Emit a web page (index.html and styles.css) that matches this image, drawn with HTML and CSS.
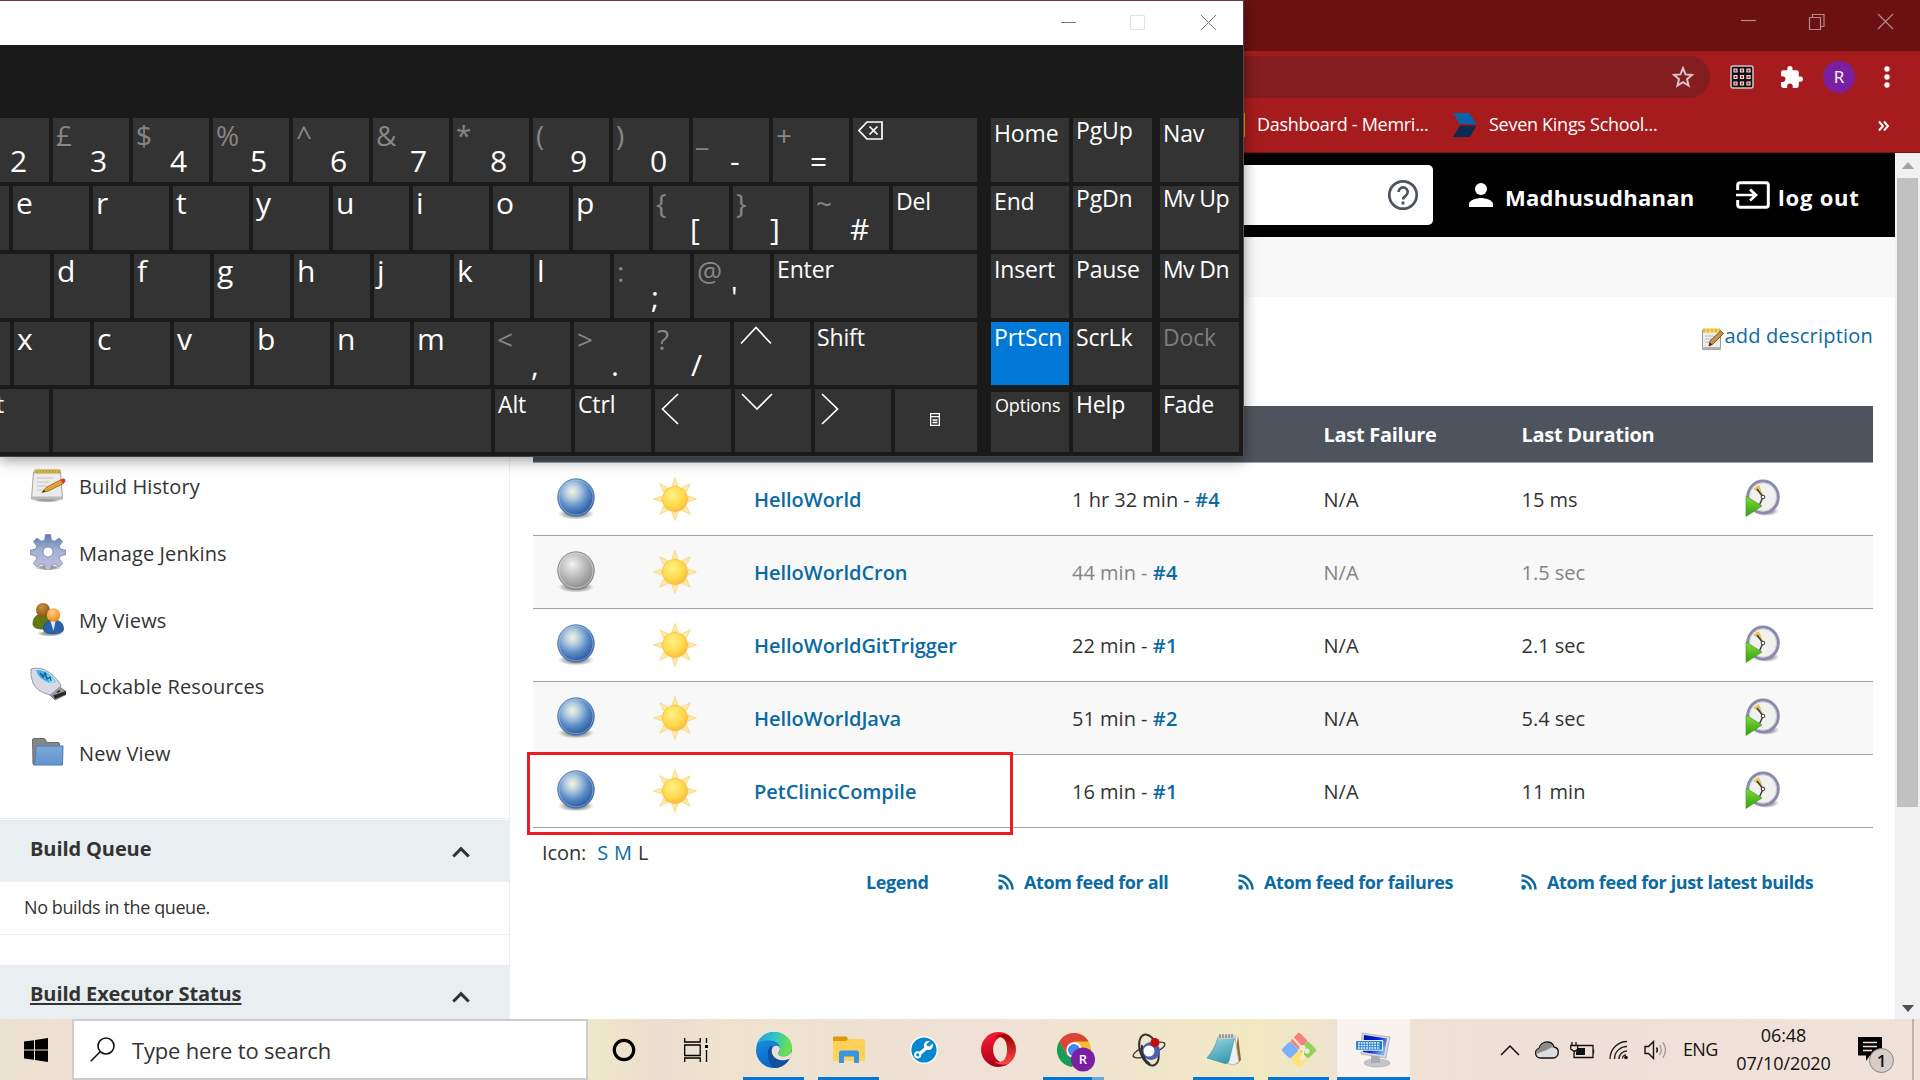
FILE: index.html
```html
<!DOCTYPE html>
<html lang="en">
<head>
<meta charset="utf-8">
<title>Dashboard [Jenkins]</title>
<link rel="stylesheet" href="styles.css">
</head>
<body>
<svg class="defs" aria-hidden="true">
  <defs>
    <radialGradient id="gBlue" cx=".4" cy=".34" r=".66"><stop offset="0" stop-color="#f4f6dc"/><stop offset=".3" stop-color="#b3cbe0"/><stop offset=".62" stop-color="#5f8fc8"/><stop offset="1" stop-color="#28589c"/></radialGradient>
    <radialGradient id="gGrey" cx=".4" cy=".34" r=".66"><stop offset="0" stop-color="#f2f2f2"/><stop offset=".5" stop-color="#bdbdbd"/><stop offset="1" stop-color="#8c8c8c"/></radialGradient>
    <radialGradient id="gShade"><stop offset=".5" stop-color="#000" stop-opacity=".38"/><stop offset="1" stop-color="#000" stop-opacity="0"/></radialGradient>
    <radialGradient id="gSun" cx=".4" cy=".35" r=".7"><stop offset="0" stop-color="#fff08a"/><stop offset=".6" stop-color="#ffdb4a"/><stop offset="1" stop-color="#fbb640"/></radialGradient>
    <linearGradient id="gEdge" x1="0" y1="0" x2="1" y2=".3"><stop offset="0" stop-color="#1b9de0"/><stop offset=".5" stop-color="#2fc3c8"/><stop offset="1" stop-color="#6be04c"/></linearGradient>
    <linearGradient id="gEdge2" x1="0" y1="0" x2=".3" y2="1"><stop offset="0" stop-color="#1c94e0"/><stop offset="1" stop-color="#0a68c8"/></linearGradient>
    <linearGradient id="gOpera" x1="0" y1="0" x2=".3" y2="1"><stop offset="0" stop-color="#ff2038"/><stop offset="1" stop-color="#a8001c"/></linearGradient>
    <linearGradient id="gOpera2" x1="0" y1="0" x2="0" y2="1"><stop offset="0" stop-color="#9c0000"/><stop offset="1" stop-color="#ff4b4b"/></linearGradient>
    <linearGradient id="gPad" x1="0" y1="0" x2=".4" y2="1"><stop offset="0" stop-color="#9fdbe4"/><stop offset="1" stop-color="#3d9db0"/></linearGradient>
    <linearGradient id="gScreen" x1="0" y1="0" x2="1" y2=".6"><stop offset="0" stop-color="#0710a0"/><stop offset=".55" stop-color="#0a1fd0"/><stop offset="1" stop-color="#7fb4ff"/></linearGradient>
    <linearGradient id="gGear" x1="0" y1="0" x2="0" y2="1"><stop offset="0" stop-color="#5b7bab"/><stop offset=".45" stop-color="#a3b0d3"/><stop offset="1" stop-color="#c3bfe2"/></linearGradient>
    <linearGradient id="gFolder" x1="0" y1="0" x2="0" y2="1"><stop offset="0" stop-color="#7ea7d8"/><stop offset="1" stop-color="#6394cd"/></linearGradient>
    <linearGradient id="gPlay" x1="0" y1="0" x2="0" y2="1"><stop offset="0" stop-color="#82dc3a"/><stop offset="1" stop-color="#2fa20c"/></linearGradient>
    <radialGradient id="gBrown" cx=".4" cy=".3" r=".7"><stop offset="0" stop-color="#c99045"/><stop offset="1" stop-color="#8a5310"/></radialGradient>
    <radialGradient id="gOrange" cx=".4" cy=".3" r=".7"><stop offset="0" stop-color="#ffd08a"/><stop offset="1" stop-color="#f08c14"/></radialGradient>
  </defs>
  <symbol id="ball-blue" viewBox="0 0 38 42">
    <ellipse cx="19" cy="36" rx="18" ry="5.5" fill="url(#gShade)"/>
    <ellipse cx="19" cy="19.5" rx="18.3" ry="18.7" fill="url(#gBlue)" stroke="#4472ad" stroke-width=".8"/>
    <ellipse cx="19" cy="19.5" rx="17" ry="17.4" fill="none" stroke="#a9c2e2" stroke-width="1" opacity=".65"/>
  </symbol>
  <symbol id="ball-grey" viewBox="0 0 38 42">
    <ellipse cx="19" cy="36" rx="18" ry="5.5" fill="url(#gShade)"/>
    <ellipse cx="19" cy="19.5" rx="18.3" ry="18.7" fill="url(#gGrey)" stroke="#7d7d7d" stroke-width=".8"/>
    <ellipse cx="19" cy="19.5" rx="17" ry="17.4" fill="none" stroke="#d6d6d6" stroke-width="1" opacity=".8"/>
  </symbol>
  <symbol id="sun" viewBox="-22 -22 44 44">
    <g fill="#ffe9a6" stroke="#f8d27d" stroke-width=".7">
      <path id="ray" d="M-3-13L0-21.5L3-13z"/>
      <use href="#ray" transform="rotate(45)"/><use href="#ray" transform="rotate(90)"/><use href="#ray" transform="rotate(135)"/><use href="#ray" transform="rotate(180)"/><use href="#ray" transform="rotate(225)"/><use href="#ray" transform="rotate(270)"/><use href="#ray" transform="rotate(315)"/>
    </g>
    <circle r="12.6" fill="url(#gSun)" stroke="#f7c04a" stroke-width=".9"/>
  </symbol>
  <symbol id="clock" viewBox="0 0 36 38">
    <ellipse cx="21" cy="32" rx="13" ry="5" fill="url(#gShade)"/>
    <ellipse cx="18" cy="18" rx="15.3" ry="16" fill="#f1f1f0" stroke="#8b89ae" stroke-width="3"/>
    <ellipse cx="18" cy="18" rx="13.6" ry="14.2" fill="none" stroke="#c5c5c5" stroke-width=".8"/>
    <path d="M8 10L14 6l4 10z" fill="#e6c25c"/>
    <path d="M12 10l6 8M18 18l-4 9" stroke="#3c3c3c" stroke-width="1.5" fill="none"/>
    <circle cx="18" cy="18" r="1.8" fill="#fff" stroke="#333"/>
    <path d="M1 17l16 10L1 37.5z" fill="url(#gPlay)" stroke="#4d9a35" stroke-width=".7"/>
  </symbol>
  <symbol id="rss" viewBox="0 0 16 16"><circle cx="2.6" cy="13.4" r="2.3" fill="currentColor"/><path d="M.5 6.4a9 9 0 0 1 9.1 9.1M.5 1.5a14 14 0 0 1 14 14" fill="none" stroke="currentColor" stroke-width="2.5"/></symbol>
  <symbol id="chev" viewBox="0 0 18 12"><path d="M1.3 10.5L9 2.6l7.700 7.900" fill="none" stroke="#333" stroke-width="3.100"/></symbol>
</svg>

<div class="tabstrip">
  <svg class="winbtns" width="160" height="30" viewBox="0 0 160 30" fill="none" stroke="#b58889" stroke-width="1.2"><path d="M1 12.500h15"/><path d="M69.500 9.500h11v12h-11zM72.500 9.500v-3h11.500v12h-3.500"/><path d="M138 6l15 15M153 6l-15 15"/></svg>
</div>
<div class="toolbar">
  <div class="omnibox"><svg width="24" height="24" viewBox="0 0 24 24" fill="none" stroke="#d9c3c4" stroke-width="2"><path d="M12 3.200l2.500 6.200 6.500.5-5 4.300 1.600 6.500L12 17.200l-5.600 3.500L8 14.200 3 9.900l6.500-.5z"/></svg></div>
  <svg class="ext" width="24" height="24" viewBox="0 0 24 24"><rect x="1" y="1" width="22" height="22" rx="2" fill="#111" stroke="#cfc4c4" stroke-width="1.500"/><g fill="#a61c1e" stroke="#e8dcdc" stroke-width="1.200"><path d="M4 4h3v3H4zM10.500 4h3v3h-3zM17 4h3v3h-3zM4 10.500h3v3H4zM10.500 10.500h3v3h-3zM17 10.500h3v3h-3zM4 17h3v3H4zM10.500 17h3v3h-3zM17 17h3v3h-3z"/></g></svg>
  <svg class="puzzle" width="25" height="25" viewBox="0 0 24 24" fill="#fff"><path d="M20.500 11H19V7a2 2 0 0 0-2-2h-4V3.500a2.500 2.500 0 0 0-5 0V5H4a2 2 0 0 0-2 2v3.800h1.500a2.700 2.700 0 0 1 0 5.400H2V20a2 2 0 0 0 2 2h3.800v-1.500a2.700 2.700 0 0 1 5.400 0V22H17a2 2 0 0 0 2-2v-4h1.500a2.500 2.500 0 0 0 0-5z"/></svg>
  <span class="avatar">R</span>
  <svg class="dots" width="6" height="22" viewBox="0 0 6 22" fill="#fff"><circle cx="3" cy="3" r="2.700"/><circle cx="3" cy="11" r="2.700"/><circle cx="3" cy="19" r="2.700"/></svg>
</div>
<div class="bookmarks">
  <i class="sliver"></i>
  <span class="bm first">Dashboard - Memri...</span>
  <svg width="24" height="24" viewBox="0 0 24 24"><path d="M0 0h16l7.500 11H7z" fill="#0a62ad"/><path d="M7 12.500h16.500L17 24H0z" fill="#0b2a52"/></svg>
  <span class="bm">Seven Kings School...</span>
  <svg class="more" width="12" height="12" viewBox="0 0 12 12" fill="none" stroke="#fff" stroke-width="2"><path d="M1 1.500L5 6l-4 4.500M6 1.500L10 6l-4 4.500"/></svg>
</div>

<div class="viewport">
  <div class="page">
    <header class="jheader">
      <div class="jsearch"><svg width="32" height="32" viewBox="0 0 32 32" fill="none" stroke="#4d545d"><circle cx="16" cy="16" r="13.700" stroke-width="2.700"/><path d="M11.500 13a4.600 4.600 0 1 1 7.300 3.700c-1.900 1.300-2.700 2-2.700 3.800" stroke-width="2.700"/><path d="M16 22.500v3" stroke-width="2.900"/></svg></div>
      <a class="juser"><svg width="24" height="24" viewBox="0 0 24 24" fill="#fff"><circle cx="12" cy="6" r="6"/><path d="M0 24v-3c0-4 8-6 12-6s12 2 12 6v3z"/></svg>Madhusudhanan</a>
      <a class="jlogout"><svg width="34" height="28" viewBox="0 0 34 28" fill="none" stroke="#fff" stroke-width="3"><path d="M1.700 9V4a2.300 2.300 0 0 1 2.300-2.300h26A2.300 2.300 0 0 1 32.300 4v20a2.300 2.300 0 0 1-2.300 2.300H4A2.300 2.300 0 0 1 1.700 24v-5"/><path d="M0 14h19M14 8.500l6 5.500-6 5.500" stroke-width="2.700"/></svg>log out</a>
    </header>
    <div class="crumbs"></div>
    <div class="columns">
      <aside class="side">
        <nav class="tasks">
          <a><svg width="36" height="36" viewBox="0 0 36 36"><ellipse cx="17" cy="33" rx="15" ry="2.500" fill="url(#gShade)"/><path d="M3.500 5h27l2 27h-31z" fill="#ececec" stroke="#a6a6a6"/><path d="M1.500 29.500h31V32h-31z" fill="#b9b9b9"/><path d="M4.500 2.500h26v4h-26z" fill="#b9a238"/><path d="M6 1.500v5M9 1.500v5M12 1.500v5M15 1.500v5M18 1.500v5M21 1.500v5M24 1.500v5M27 1.500v5" stroke="#e0cf6a" stroke-width="1"/><path d="M7 11h16M7 15h12M7 19h9M7 23h7" stroke="#c2c2c2"/><path d="M12 25.500l4-5L31 12.500l2.500 4-15 7.500z" fill="#e0a03c" stroke="#9c6416" stroke-width=".8"/><path d="M30.500 12.700l3-1.400q2.500.700 1.800 3.700l-2.500 1.700z" fill="#dd3a35"/><path d="M12 25.500l2-2.500 1.500 1.500z" fill="#333"/></svg>Build History</a>
          <a><svg width="36" height="36" viewBox="-18 -18 36 36"><ellipse cy="15.500" rx="14" ry="3" fill="url(#gShade)"/><g fill="url(#gGear)" stroke="#7686b2" stroke-width=".8"><path fill-rule="evenodd" d="M-2.500-17.500h5l1 5.500 3 1.300 4.600-3.300 3.500 3.500-3.300 4.600 1.200 3 5 1v4.600l-5 1-1.200 3 3.300 4.600-3.500 3.500-4.600-3-3 1.200-1 5h-5l-1-5-3-1.200-4.600 3-3.500-3.500 3.300-4.600-1.200-3-5-1V-1.900l5-1 1.200-3-3.300-4.600 3.500-3.500 4.600 3.300 3-1.300zM0-5A5 5 0 1 0 0 5 5 5 0 1 0 0-5z"/></g></svg>Manage Jenkins</a>
          <a><svg width="36" height="36" viewBox="0 0 36 36"><ellipse cx="20" cy="32.500" rx="13" ry="3" fill="url(#gShade)"/><path d="M3 23c0-7 4-10 10-10s9 4 9 10c0 4-4 5-9 5s-10-1-10-5z" fill="#61790f" stroke="#47590a" stroke-width=".7"/><circle cx="13" cy="9" r="7" fill="url(#gBrown)"/><path d="M13.500 28c0-6 4-9 10-9s10 3 10 9c0 4-5 4.700-10 4.700s-10-.7-10-4.700z" fill="#2b63ab" stroke="#1d4a86" stroke-width=".7"/><path d="M20.500 20h5L23.500 30z" fill="#e8eef7"/><circle cx="23.500" cy="14" r="6.700" fill="url(#gOrange)"/></svg>My Views</a>
          <a><svg width="36" height="36" viewBox="0 0 36 36"><path d="M16 24l8-8 12 8.500v3L25 33z" fill="#9a9a9a" stroke="#6f6f6f" stroke-width=".8"/><path d="M23 28.500l13-4.500v3.500L25 32z" fill="#2a2a2a"/><path d="M22 23l4-2.500M27 25.500l3-2" stroke="#333" stroke-width="1.600"/><path d="M1 2Q11-1 20 6t11 13L20 28Q6 24 3 16T1 2z" fill="#d9d9e4" stroke="#9899b0" stroke-width="1"/><path d="M6 3q9 0 14.500 5.500T26 15l-6 1Q9 13 6 3z" fill="#3fb0ea"/><path d="M17 7q6 4 9 8l-6 1z" fill="#8fe6f5"/><path d="M10 6l3 4 2-4 2 6 3-2 1 4" stroke="#155a8c" stroke-width="1.300" fill="none"/></svg>Lockable Resources</a>
          <a><svg width="36" height="36" viewBox="0 0 36 36"><path d="M2.500 6q0-1.500 1.500-1.500h10.500l2.500 4h11q1.500 0 1.500 1.500v20H3z" fill="#868686" stroke="#6b6b6b"/><path d="M6 12h27l-.5 19H3.500q2-1 2.500-19z" fill="url(#gFolder)" stroke="#4b7ab5" stroke-width="1"/></svg>New View</a>
        </nav>
        <div class="pane-head">Build Queue<svg width="18" height="12"><use href="#chev"/></svg></div>
        <div class="pane-body">No builds in the queue.</div>
        <div class="pane-head exec"><u>Build Executor Status</u><svg width="18" height="12"><use href="#chev"/></svg></div>
      </aside>
      <main class="main">
        <div class="desc"><svg width="23" height="24" viewBox="0 0 23 24"><path d="M1.500 3h18v19.500h-18z" fill="#ededed" stroke="#9c9c9c"/><path d="M1 20h19v2.500H1z" fill="#b0b0b0"/><path d="M2 1.500h17v4H2z" fill="#e2bc2c"/><path d="M5 1v5M9 1v5M13 1v5M17 1v5" stroke="#fbe58a"/><path d="M4 9h9M4 12h7M4 15h4" stroke="#bbb"/><path d="M8 19l1-5L19.500 4l3 2.500L12 17z" fill="#c9954a" stroke="#70481a" stroke-width=".9"/><path d="M8 19l.7-3.500 2.500 2z" fill="#222"/></svg><a>add description</a></div>
        <div class="jobs">
          <div class="row head"><span></span><span></span><span>Name</span><span>Last Success</span><span>Last Failure</span><span>Last Duration</span><span></span></div>
          <div class="row"><svg class="ball"><use href="#ball-blue"/></svg><svg class="sun"><use href="#sun"/></svg><a>HelloWorld</a><span>1 hr 32 min - <a>#4</a></span><span>N/A</span><span>15 ms</span><svg class="clock"><use href="#clock"/></svg></div>
          <div class="row alt off"><svg class="ball"><use href="#ball-grey"/></svg><svg class="sun"><use href="#sun"/></svg><a>HelloWorldCron</a><span>44 min - <a>#4</a></span><span>N/A</span><span>1.5 sec</span></div>
          <div class="row"><svg class="ball"><use href="#ball-blue"/></svg><svg class="sun"><use href="#sun"/></svg><a>HelloWorldGitTrigger</a><span>22 min - <a>#1</a></span><span>N/A</span><span>2.1 sec</span><svg class="clock"><use href="#clock"/></svg></div>
          <div class="row alt"><svg class="ball"><use href="#ball-blue"/></svg><svg class="sun"><use href="#sun"/></svg><a>HelloWorldJava</a><span>51 min - <a>#2</a></span><span>N/A</span><span>5.4 sec</span><svg class="clock"><use href="#clock"/></svg></div>
          <div class="row marked"><svg class="ball"><use href="#ball-blue"/></svg><svg class="sun"><use href="#sun"/></svg><a>PetClinicCompile</a><span>16 min - <a>#1</a></span><span>N/A</span><span>11 min</span><svg class="clock"><use href="#clock"/></svg></div>
        </div>
        <div class="iconsize">Icon:<a class="s">S</a><a>M</a><span>L</span></div>
        <div class="feeds"><a>Legend</a><a class="f1"><svg><use href="#rss"/></svg>Atom feed for all</a><a class="f2"><svg><use href="#rss"/></svg>Atom feed for failures</a><a class="f3"><svg><use href="#rss"/></svg>Atom feed for just latest builds</a></div>
      </main>
    </div>
  </div>
  <div class="scrollbar">
    <svg width="12" height="8" viewBox="0 0 12 8"><path d="M0 8L6 1l6 7z" fill="#a3a3a3"/></svg>
    <div class="thumb"></div>
    <svg class="down" width="12" height="8" viewBox="0 0 12 8"><path d="M0 0h12L6 7z" fill="#505050"/></svg>
  </div>
</div>

<div class="osk">
  <div class="osk-title"><svg width="160" height="18" viewBox="0 0 160 18" fill="none" stroke-width="1"><path d="M1 8.500h15" stroke="#777"/><path d="M70.500 1.500h14v14h-14z" stroke="#e3e3e3"/><path d="M141 1l15 15M156 1l-15 15" stroke="#777"/></svg></div>
  <div class="osk-body">
    <div class="keys">
      <div class="krow r1"><b class="d"><i></i>2</b><b class="d"><i>£</i>3</b><b class="d"><i>$</i>4</b><b class="d"><i>%</i>5</b><b class="d"><i>^</i>6</b><b class="d"><i>&amp;</i>7</b><b class="d"><i>*</i>8</b><b class="d"><i>(</i>9</b><b class="d"><i>)</i>0</b><b class="d"><i>_</i>-</b><b class="d"><i>+</i>=</b><b class="w"><svg class="bksp" width="25" height="19" viewBox="0 0 25 19" fill="none" stroke="#fff" stroke-width="1.500"><path d="M9 1h15v17H9L1 9.500z"/><path d="M11.500 5.500l8 8M19.500 5.500l-8 8"/></svg></b></div>
      <div class="krow r2"><b></b><b>e</b><b>r</b><b>t</b><b>y</b><b>u</b><b>i</b><b>o</b><b>p</b><b class="d"><i>{</i>[</b><b class="d"><i>}</i>]</b><b class="d"><i>~</i>#</b><b class="w s">Del</b></div>
      <div class="krow r3"><b></b><b>d</b><b>f</b><b>g</b><b>h</b><b>j</b><b>k</b><b>l</b><b class="d"><i>:</i>;</b><b class="d"><i>@</i>'</b><b class="w s">Enter</b></div>
      <div class="krow r4"><b></b><b>x</b><b>c</b><b>v</b><b>b</b><b>n</b><b>m</b><b class="d"><i>&lt;</i>,</b><b class="d"><i>&gt;</i>.</b><b class="d"><i>?</i>/</b><b><svg class="up" width="32" height="19" viewBox="0 0 32 19"><path d="M1 17.500L16 1.500l15 16"/></svg></b><b class="w s">Shift</b></div>
      <div class="krow r5"><b class="s">Alt</b><b class="space"></b><b class="s">Alt</b><b class="s">Ctrl</b><b><svg width="18" height="32" viewBox="0 0 18 32"><path d="M17 1L1.500 16 17 31"/></svg></b><b><svg width="32" height="17" viewBox="0 0 32 17"><path d="M1 1l15 15L31 1"/></svg></b><b><svg width="18" height="32" viewBox="0 0 18 32"><path d="M1 1l15.500 15L1 31"/></svg></b><b class="w"><svg class="menu" width="10" height="13" viewBox="0 0 10 13"><path d="M.6.6h8.800v11.800H.6zM.6 3.700h8.800M2.500 7h5M2.500 9.500h5"/></svg></b></div>
    </div>
    <div class="ncol n1"><b>Home</b><b>End</b><b>Insert</b><b class="on">PrtScn</b><b class="short opt">Options</b></div>
    <div class="ncol n2"><b class="hi">PgUp</b><b class="hi">PgDn</b><b>Pause</b><b>ScrLk</b><b class="short hi">Help</b></div>
    <div class="ncol n3"><b>Nav</b><b class="hi mv">Mv Up</b><b class="mv">Mv Dn</b><b class="dis">Dock</b><b>Fade</b></div>
  </div>
</div>

<div class="taskbar">
  <div class="start"><svg width="24" height="24" viewBox="0 0 24 24"><path d="M0 3.500l10-1.300v9.300H0zM11 2l13-2v11.500H11zM0 12.500h10v9.300L0 20.500zM11 12.500h13V24l-13-1.900z"/></svg></div>
  <div class="tsearch"><svg width="25" height="25" viewBox="0 0 25 25" fill="none" stroke="#111" stroke-width="1.600"><circle cx="16" cy="9" r="8"/><path d="M10.200 14.800L.7 24.300"/></svg>Type here to search</div>
  <div class="tcell"><svg width="24" height="24" viewBox="0 0 24 24"><circle cx="12" cy="12" r="9.700" fill="none" stroke="#000" stroke-width="3.200"/></svg></div>
  <div class="tcell"><svg width="25" height="24" viewBox="0 0 25 24" fill="none" stroke="#000" stroke-width="1.300"><path d="M.7 0v4h15.500V0M.7 7h15.500v10.500H.7zM.7 24v-4h15.500v4M22.500 0v5M22.500 12v12"/><path d="M21 7h3v3h-3z" fill="#000" stroke="none"/></svg></div>
  <div class="apps">
    <div class="app run"><svg width="36" height="36" viewBox="0 0 36 36"><circle cx="18" cy="18" r="18" fill="url(#gEdge2)"/><path d="M1 12C4 4 11 0 18 0c10 0 18 7 18 15.500 0 5.500-4 9-9 9-3 0-5-1-5-2.500s2-2 2-5.500c0-4-4-8-10.500-8C7 8.500 3 10 1 12z" fill="url(#gEdge)"/><path d="M12 20c0-3 1.500-5 4-6.200-1 3 1 12.200 10 13.200 4 .4 6-1 7.500-.8C30 33 24 36 18 36c-5-3-6-10-6-16z" fill="#10509c"/><path d="M15.700 19c0-3 1.800-5.300 4.500-5.300s4 2 3.600 3.800c-.4 1.800-1.800 2.800-1.800 4.500 0 1.600 2.500 2.500 5 2.500 4 0 6.500-2 9-5 0 3-1 5.500-2 7-3 1.500-6 2-9 1.700-6-.7-9.300-5-9.300-9.200z" fill="#ece1d4"/></svg></div>
    <div class="app run"><svg width="32" height="28" viewBox="0 0 32 28"><path d="M0 2Q0 .5 1.500.5h12L15 3l-2 3H0z" fill="#dc9b08"/><path d="M0 5h13l2.500-2H30q2 0 2 2v20H0z" fill="#ffd257"/><path d="M6 27V17q0-2.500 2.500-2.500h15Q26 14.500 26 17v10h-5v-6.500H11V27z" fill="#3b93dd"/></svg></div>
    <div class="app"><svg width="28" height="28" viewBox="0 0 28 28"><circle cx="14" cy="14" r="13.300" fill="#0787d0" stroke="#fff" stroke-width="1.400"/><path d="M8 19l9-7.500" stroke="#fff" stroke-width="3.400"/><path d="M22.500 7.500L19 10.500l-2-.5-.3-2L20 5.200a4.600 4.600 0 1 0 2.500 2.300z" fill="#fff"/><circle cx="7.700" cy="18.800" r="2.600" fill="#0787d0" stroke="#fff" stroke-width="2"/></svg></div>
    <div class="app"><svg width="35" height="35" viewBox="0 0 35 35"><path d="M17.500 0a17.500 17.500 0 1 0 0 35c4.500 0 8.500-1.700 11.600-4.400-6.500 2.500-17-1.500-17-13.100s10.500-15.600 17-13.100A17.400 17.400 0 0 0 17.500 0z" fill="url(#gOpera)"/><path d="M12.500 6.500c2-2.500 4.500-4 7.500-4 6 0 10.500 6.500 10.500 15S26 32.500 20 32.500c-3 0-5.500-1.500-7.500-4 3 2.800 9.500 2.500 12-3 2-4.500 2-11.500 0-16-2.500-5.500-9-5.800-12-3zM20 2.500c3-.4 6.200 0 9.100 1.900a17.500 17.500 0 0 1 0 26.200c-3 2.100-6 2.300-9.100 1.900 5.500-1 7.500-8 7.500-15S25 3.500 20 2.500z" fill="url(#gOpera2)"/></svg></div>
    <div class="app run multi"><svg width="40" height="40" viewBox="-18 -18 40 40"><circle r="17" fill="#f7bf2c"/><path d="M-14.700-8.500A17 17 0 0 1 14.700-8.500H0L-7.400 4.300z" fill="#db4437"/><path d="M-14.700-8.500L-7.400 4.300Q-4 9 3 7L-2 17A17 17 0 0 1-14.700-8.500z" fill="#149e5b"/><circle r="7.700" fill="#fff"/><circle r="6" fill="#4285f4"/><circle cx="9" cy="9.500" r="12" fill="#7b1fa2"/><text x="9" y="14.200" text-anchor="middle" class="chr">R</text></svg></div>
    <div class="app"><svg width="36" height="36" viewBox="-18 -18 36 36"><g fill="none" stroke="#333" stroke-width="2"><ellipse rx="17" ry="5" transform="rotate(-22)" stroke-width="1.300"/><ellipse rx="9" ry="16" transform="rotate(-18)"/></g><circle r="9" cx="2" cy="1" fill="#4a5fb0"/><circle r="5.500" cy="1" fill="#fff"/><circle cx="6" cy="-7.500" r="4.500" fill="#c40a0a"/><path d="M-7-5Q-9 7 1 14" fill="none" stroke="#333" stroke-width="2"/></svg></div>
    <div class="app run"><svg width="34" height="34" viewBox="0 0 34 34"><path d="M31 3l3 24-4 4-3-2z" fill="#9b6b2c"/><path d="M28 4l4 25-5 3-12-3z" fill="#eef0f2" stroke="#999" stroke-width=".6"/><path d="M11 4l17-1-6 25q-1 3-4 2.500L0 25Q8 16 11 4z" fill="url(#gPad)" stroke="#3c8b9c" stroke-width=".6"/><path d="M11 2.500l18-.5-.5 3.500-18 1z" fill="#c8ced2"/><path d="M13 1v4M16 1v4M19 1v4M22 1v4M25 .700v4" stroke="#666"/></svg></div>
    <div class="app run"><svg width="36" height="36" viewBox="-18 -18 36 36"><g><rect x="-6.300" y="-6.300" width="12.600" height="12.600" rx="2" transform="translate(0 -9) rotate(45)" fill="#f97f7f"/><rect x="-6.300" y="-6.300" width="12.600" height="12.600" rx="2" transform="translate(9 0) rotate(45)" fill="#8fd35c"/><rect x="-6.300" y="-6.300" width="12.600" height="12.600" rx="2" transform="translate(0 9) rotate(45)" fill="#ffe27a"/><rect x="-6.300" y="-6.300" width="12.600" height="12.600" rx="2" transform="translate(-9 0) rotate(45)" fill="#7fb0ff"/></g><path d="M-6-12L4-1v9M3-2l5 3" stroke="#f3ead0" stroke-width="2" fill="none"/><g fill="#f3ead0"><circle cx="3.500" cy="-2" r="3"/><circle cx="8" cy="1" r="2.600"/><circle cx="3.500" cy="8" r="2.800"/></g></svg></div>
    <div class="app run active"><svg width="38" height="36" viewBox="0 0 38 36"><ellipse cx="22" cy="31" rx="13" ry="4" fill="#c3c6cb" stroke="#999" stroke-width=".5"/><path d="M16 24h9v7h-9z" fill="#a9adb3"/><path d="M7 1l28 4-4 21L6 22z" fill="#d5d9de" stroke="#999" stroke-width=".6"/><path d="M9 3l23 3.500-3 17L8 20z" fill="url(#gScreen)"/><rect x=".6" y="8.600" width="27" height="9.600" fill="#1c7fd0" stroke="#fff" stroke-width="1"/><path d="M3 11h22M3 13.500h22M3 16h22" stroke="#fff" stroke-width="1.500" stroke-dasharray="1.800 .9"/></svg></div>
  </div>
  <div class="tray">
    <div class="tr"><svg width="20" height="12" viewBox="0 0 20 12" fill="none" stroke="#111" stroke-width="1.500"><path d="M1 11l9-9 9 9"/></svg></div>
    <div class="tr"><svg width="25" height="18" viewBox="0 0 25 18"><path d="M6 17a5 5 0 0 1-1-9.700C6 3 10 1 13 1c3.500 0 6 2 7 5 3 .5 4.300 3 4.300 5.200C24.300 14.500 22 17 19 17z" fill="#ddd" stroke="#111" stroke-width="1.300"/><path d="M5.500 7.500C7 3.500 10 1.700 13 1.700c3 0 5.500 1.800 6.400 4.500-3 0-5 2-8 3.300L1.800 13c0-3 1.500-5 3.700-5.500z" fill="#8c8c8c"/></svg></div>
    <div class="tr"><svg width="25" height="18" viewBox="0 0 25 18" fill="none" stroke="#111" stroke-width="1.300"><path d="M8 4.500h15v12H4v-4M23.500 8.500v4"/><path d="M8 7h7v7H6v-3z" fill="#111" stroke="none"/><path d="M2 1v3M6 1v3M.7 4.500h7V8L5.500 10h-2L.7 8z"/><path d="M4.200 10v3"/></svg></div>
    <div class="tr wide"><svg width="20" height="20" viewBox="0 0 20 20" fill="none" stroke="#222" stroke-width="1.400"><path d="M1 19C1 9 9 1.500 18 1.500M5.500 19C5.500 12 11 6.500 18 6.500M10 19c0-4.500 3.500-8 8-8M14 19" /><circle cx="17" cy="17.500" r="1.800" fill="#111" stroke="none"/><path d="M13.500 18.500c0-2 1.700-3.500 3.500-3.500"/></svg></div>
    <div class="tr"><svg width="23" height="20" viewBox="0 0 23 20" fill="none" stroke="#111" stroke-width="1.400"><path d="M1 6.500h3.500l5-5v17l-5-5H1z"/><path d="M12.500 7.500q1.800 2.500 0 5"/><path d="M15.500 5q3.500 5 0 10M19 2.500q5 7.500 0 15" stroke="#a39c97"/></svg></div>
    <div class="lang">ENG</div>
    <div class="clk"><div>06:48</div><div class="date">07/10/2020</div></div>
    <div class="note"><svg width="24" height="25" viewBox="0 0 24 25"><path d="M0 0h24v18.500H12L8 24v-5.500H0z"/><path d="M5 5.500h14M5 9.500h14M5 13.500h9" stroke="#efe2d8" stroke-width="1.300"/></svg><span class="badge">1</span></div>
  </div>
</div>
</body>
</html>
```

FILE: styles.css
```css
* { box-sizing: border-box; }
body {
  margin: 0; width: 1920px; height: 1080px; overflow: hidden; position: relative;
  display: flex; flex-direction: column;
  font-family: "Open Sans", "Noto Sans", sans-serif; font-size: 20px; color: #333; background: #fff;
}
svg { display: block; flex: none; }
.defs { position: absolute; width: 0; height: 0; }
a { color: #0b6aa2; text-decoration: none; }

/* browser chrome */
.tabstrip { height: 51px; background: #6b1112; display: flex; justify-content: flex-end; padding: 8px 20px 0 0; }
.toolbar { height: 54px; background: #a61c1e; display: flex; align-items: center; padding-right: 30px; }
.omnibox { width: 1710px; height: 42px; border-radius: 0 21px 21px 0; background: #831d1f; display: flex; align-items: center; justify-content: flex-end; padding-right: 15px; }
.ext { margin-left: 20px; }
.puzzle { margin-left: 25px; }
.avatar { margin-left: 19px; width: 32px; height: 32px; border-radius: 50%; background: #7b1fa2; color: #fff; font-size: 17px; line-height: 32px; text-align: center; }
.dots { margin-left: auto; }
.bookmarks { height: 49px; background: #a61c1e; border-bottom: 1px solid #7f1113; display: flex; align-items: flex-start; padding: 9px 30px 0 0; color: #fff; font-size: 18px; }
.sliver { width: 1245px; height: 24px; background: #d8a70c; }
.bm { line-height: 23px; letter-spacing: -.28px; margin-left: 12px; white-space: nowrap; }
.bm.first { margin-right: 28px; width: 168px; }
.more { margin: 7px 0 0 auto; }

/* page */
.viewport { height: 866px; display: flex; }
.page { width: 1895px; display: flex; flex-direction: column; overflow: hidden; }
.jheader { height: 84px; flex: none; background: #000; display: flex; align-items: center; font-weight: 700; font-size: 22px; }
.jheader a { color: #fff; display: flex; align-items: center; }
.jsearch { width: 1433px; height: 60px; background: #fff; border-radius: 5px; display: flex; align-items: center; justify-content: flex-end; padding-right: 14px; }
.juser { margin-left: 36px; width: 267px; gap: 12px; letter-spacing: .25px; line-height: 30px; padding-top: 3px; }
.juser svg { margin-top: -3px; }
.jlogout { gap: 8px; letter-spacing: .8px; padding-top: 3px; white-space: nowrap; }
.jlogout svg { margin-top: -3px; }
.crumbs { height: 60px; flex: none; background: #f8f8f8; }
.columns { flex: 1; min-height: 0; display: flex; }
.side { width: 510px; border-right: 1px solid #eaeef0; padding-top: 156px; overflow: hidden; }
.tasks { height: 366px; border-bottom: 1px solid #e9eef1; }
.tasks a { height: 66.8px; display: flex; align-items: center; gap: 13px; padding-left: 30px; color: #333; font-weight: 500; font-size: 20px; letter-spacing: .12px; }
.tasks svg { margin-top: -3px; }
.pane-head { margin-top: 1px; height: 62px; background: #e9eef1; display: flex; align-items: center; justify-content: space-between; padding: 0 39px 5px 30px; font-weight: 700; letter-spacing: -.1px; }
.pane-head svg { margin-top: 6px; }
.pane-body { height: 53px; border-bottom: 1px solid #e9eef1; padding-left: 24px; font-size: 18px; letter-spacing: -.4px; line-height: 50px; }
.exec { margin-top: 30px; }
.exec u { text-decoration-thickness: 2px; text-underline-offset: 2px; text-decoration-skip-ink: none; }
.main { width: 1363px; padding-left: 23px; }
.desc { height: 109px; display: flex; justify-content: flex-end; padding-top: 25px; }
.desc svg { margin-top: 5px; }
.desc a { line-height: 28px; letter-spacing: .22px; }
.row { height: 73px; border-bottom: 1px solid #98a6b0; display: grid; grid-template-columns: 96px 125px 318px 251.500px 198px 223.500px 1fr; align-items: center; position: relative; }
.row > a { font-weight: 600; letter-spacing: -.03px; }
.row > span a { font-weight: 600; letter-spacing: .3px; }
.row.head { height: 57px; background: #4d545d; color: #fff; font-weight: 700; letter-spacing: -.28px; }
.row.alt { background: #f8f8f8; }
.row.off > span { color: #848484; }
.ball { width: 38px; height: 42px; margin-left: 24px; }
.sun { width: 44px; height: 44px; margin-left: 24px; }
.clock { width: 36px; height: 38px; margin-top: -3px; }
.marked::after { content: ""; position: absolute; left: -6px; top: -3px; width: 480px; height: 77px; border: 3px solid #ed1c24; }
.iconsize { height: 53px; padding: 11px 0 0 9px; display: flex; line-height: 28px; letter-spacing: -.1px; }
.iconsize .s { margin: 0 6px 0 11px; }
.iconsize a { font-weight: 500; }
.iconsize span { margin-left: 6px; }
.feeds { display: flex; padding-left: 333px; font-size: 18px; font-weight: 700; letter-spacing: -.38px; line-height: 26px; margin-top: -12px; }
.feeds a { display: flex; align-items: center; gap: 10px; white-space: nowrap; width: 132px; }
.feeds .f1, .feeds .f2, .feeds .f3 { width: 240px; }
.feeds .f2 { width: 283px; }
.feeds .f3 { width: 300px; }
.feeds svg { width: 16px; height: 16px; }
.scrollbar { width: 25px; background: #f1f1f1; display: flex; flex-direction: column; align-items: center; padding-top: 8px; }
.thumb { width: 21px; height: 629px; background: #c1c1c1; margin-top: 9px; }
.down { margin-top: 198px; }

/* on-screen keyboard window */
.osk { position: absolute; left: 0; top: 0; width: 1244px; height: 457px; background: #1a1a1a; border: solid #5a4446; border-width: 1px 1px 1px 0; border-bottom-color: #444; border-top-color: #73373b; box-shadow: 0 3px 13px rgba(0,0,0,.42); overflow: visible; clip-path: inset(0 -40px -40px 0); }
.osk-title { height: 44px; background: #fff; display: flex; justify-content: flex-end; padding: 13px 23px 0 0; }
.osk-body { display: flex; padding-top: 73px; }
.osk b { display: block; flex: none; background: #333; color: #fff; font-weight: 400; font-size: 30px; line-height: 34px; padding-left: 3px; width: 76px; overflow: hidden; white-space: nowrap; }
.osk svg { fill: none; stroke: #fff; stroke-width: 1.700; margin: 4px 0 0 3px; }
.osk .osk-title svg { margin: 0; stroke: none; stroke-width: 1; }
.keys { width: 977px; display: flex; flex-direction: column; gap: 4px; }
.krow { display: flex; gap: 4px; height: 64px; }
.r4, .r5 { height: 63px; }
.r1 b:first-child, .r5 b:first-child { margin-left: -27px; }
.r2 b:first-child { margin-left: -67px; }
.r3 b:first-child { margin-left: -26px; }
.r4 b:first-child { margin-left: -66px; }
.krow .w { flex: 1; }
.krow .space { width: 438px; }
.osk b.d { padding-left: 37px; line-height: 18px; }
.osk i { display: block; font-style: normal; font-size: 28px; line-height: 34px; height: 34px; color: #868686; margin-left: -34px; }
.osk b.s, .ncol b { font-size: 23px; line-height: 30px; letter-spacing: -.15px; }
.osk .bksp { margin: 3px 0 0 2px; }
.osk .menu { margin: 24px 0 0 32px; stroke-width: 1.300; }
.ncol { display: flex; flex-direction: column; gap: 4px; }
.ncol b { height: 64px; }
.ncol b:nth-child(n+4) { height: 63px; }
.osk .n1 b { width: 78px; }
.osk .n2 b, .osk .n3 b { width: 79px; }
.n1 { margin-left: 14px; }
.n2 { margin-left: 4px; }
.n3 { margin-left: 8px; }
.osk .ncol b.hi { line-height: 25px; }
.osk .ncol b.mv { letter-spacing: -.6px; }
.osk .ncol b.short { height: 60px; margin-top: 3px; }
.osk .ncol b.opt { font-size: 18px; line-height: 27px; padding-left: 4px; }
.osk .ncol b.on { background: #0078d7; }
.osk .ncol b.dis { color: #7d7d7d; }

/* taskbar */
.taskbar { height: 61px; flex: none; display: flex; margin-top: 0; background: linear-gradient(90deg, #ece2d0 0, #efe0d4 70px, #efe8c8 590px, #ebddd0 660px, #efe3cf 720px, #ede1d2 850px, #f0e1d7 1000px, #efe6cb 1150px, #f1e9c2 1260px, #efe2d2 1350px, #efe0d7 1500px, #f0e2d8 1920px); }
.start { width: 72px; display: flex; align-items: center; justify-content: center; }
.tsearch { width: 516px; background: #fff; border: 2px solid #ccc; display: flex; align-items: center; gap: 17px; padding-left: 16px; font-size: 22px; letter-spacing: -.18px; }
.tsearch svg { margin-top: -1px; }
.tcell { width: 72px; display: flex; align-items: center; justify-content: center; }
.apps { display: flex; margin-left: 4px; }
.app { width: 75px; display: flex; align-items: center; justify-content: center; position: relative; }
.run::after { content: ""; position: absolute; left: 7px; right: 7px; bottom: 0; height: 3px; background: #0078d7; }
.multi::after { background: linear-gradient(90deg, #0078d7 49px, #64a9e2 49px); }
.active { width: 73px; margin-left: 1px; background: #f9f3ef; }
.active::after { left: 0; right: 0; }
.multi svg { margin: 4px 0 0 4px; }
.chr { font: 600 13px "Open Sans", sans-serif; fill: #fff; }
.tray { display: flex; margin-left: 82px; font-size: 18px; color: #111; width: 428px; }
.tr { width: 36px; display: flex; align-items: center; justify-content: center; }
.tr.wide { width: 37px; }
.lang { width: 63px; padding-left: 10px; line-height: 60px; letter-spacing: -.7px; }
.clk { width: 95px; text-align: center; line-height: 28px; padding-top: 2px; }
.clk div { letter-spacing: -.1px; }
.note { margin-left: 27px; padding-top: 18px; width: 56px; border-right: 2px solid #bdb3ac; position: relative; }
.badge { position: absolute; left: 11px; top: 29px; width: 25px; height: 25px; border-radius: 50%; border: 1px solid #8a8581; background: #d5cdc7; line-height: 23px; text-align: center; font-size: 17px; font-weight: 600; }
```
